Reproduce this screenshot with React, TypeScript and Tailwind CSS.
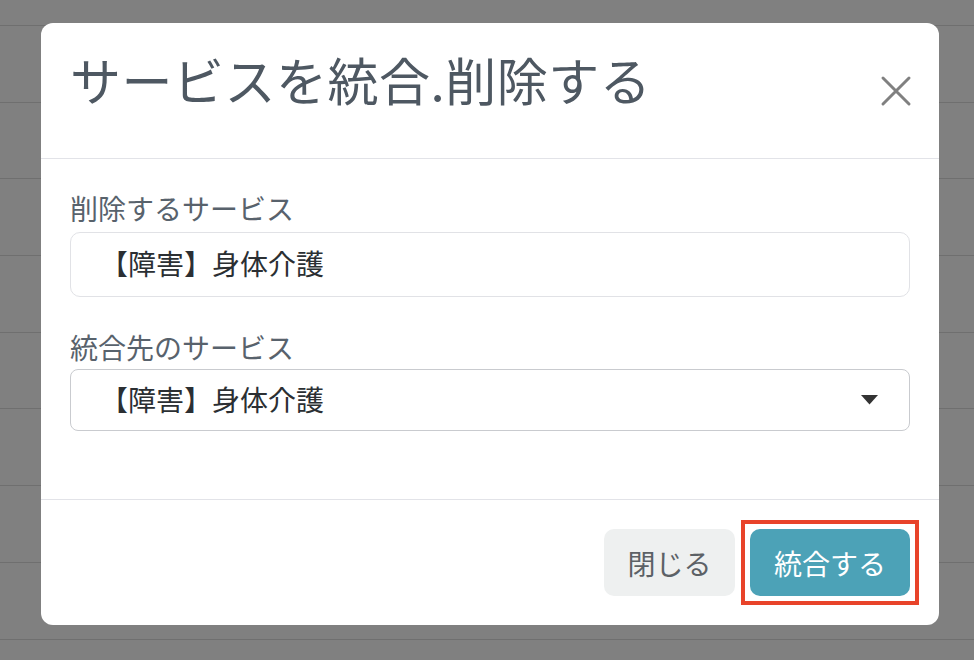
import React from "react";

const jp = { fontFamily: '"Noto Sans CJK JP", "Noto Sans", sans-serif' };

const rows = Array.from({ length: 9 });

function Backdrop() {
  return (
    <div className="flex flex-col">
      <div className="h-[25px]" />
      {rows.map((_, i) => (
        <div key={i} className="h-[76.7px] border-t border-[#6f6f6f]" />
      ))}
    </div>
  );
}

export default function App() {
  return (
    <div className="relative h-[660px] w-[974px] overflow-hidden bg-[#808080]" style={jp}>
      <Backdrop />

      <div className="absolute left-[41px] top-[23px] flex w-[898px] flex-col rounded-[12px] bg-white">
        {/* header */}
        <div className="flex h-[136px] items-start justify-between border-b border-[#e2e3e8] pl-[29px] pr-[26px]">
          <h2 className="pt-[25px] text-[51px] leading-[62px] tracking-[0.5px] text-[#4e5862]">
            サービスを統合.削除する
          </h2>
          <button className="mt-[51px] flex h-[34px] w-[34px] items-center justify-center text-[#808080]">
            <svg width="32" height="32" viewBox="0 0 32 32" fill="none" stroke="currentColor" strokeWidth="3" strokeLinecap="round">
              <path d="M3 3 L29 29 M29 3 L3 29" />
            </svg>
          </button>
        </div>

        {/* body */}
        <div className="flex h-[340px] flex-col px-[29px]">
          <label className="mt-[29px] text-[28px] leading-[40px] text-[#58626c]">削除するサービス</label>
          <div className="mt-[4px] flex h-[65px] items-center rounded-[10px] border border-[#e1e2e6] pb-[4px] pl-[29px] text-[28px] text-[#2b2f33]">
            【障害】身体介護
          </div>

          <label className="mt-[30px] text-[28px] leading-[40px] text-[#58626c]">統合先のサービス</label>
          <div className="mt-[2px] flex h-[62px] items-center justify-between rounded-[8px] border border-[#c9cbcf] pl-[29px] pr-[31px] text-[28px] text-[#2b2f33]">
            <span className="-mt-[2px]">【障害】身体介護</span>
            <svg width="17" height="10" viewBox="0 0 17 10">
              <path d="M0 0 H17 L8.5 9.5 Z" fill="#333" />
            </svg>
          </div>
        </div>

        {/* footer */}
        <div className="flex items-center justify-end gap-[15px] border-t border-[#e2e3e8] pb-[29px] pr-[29px] pt-[29px]">
          <button className="h-[67px] w-[131px] rounded-[10px] bg-[#eef0f0] text-[28px] text-[#5c6166]">
            閉じる
          </button>
          <div className="relative">
            <span className="absolute -inset-[9px] border-4 border-[#e8432a]" />
            <button className="relative h-[67px] w-[160px] rounded-[10px] bg-[#4ca2b7] text-[28px] text-white">
              統合する
            </button>
          </div>
        </div>
      </div>
    </div>
  );
}
